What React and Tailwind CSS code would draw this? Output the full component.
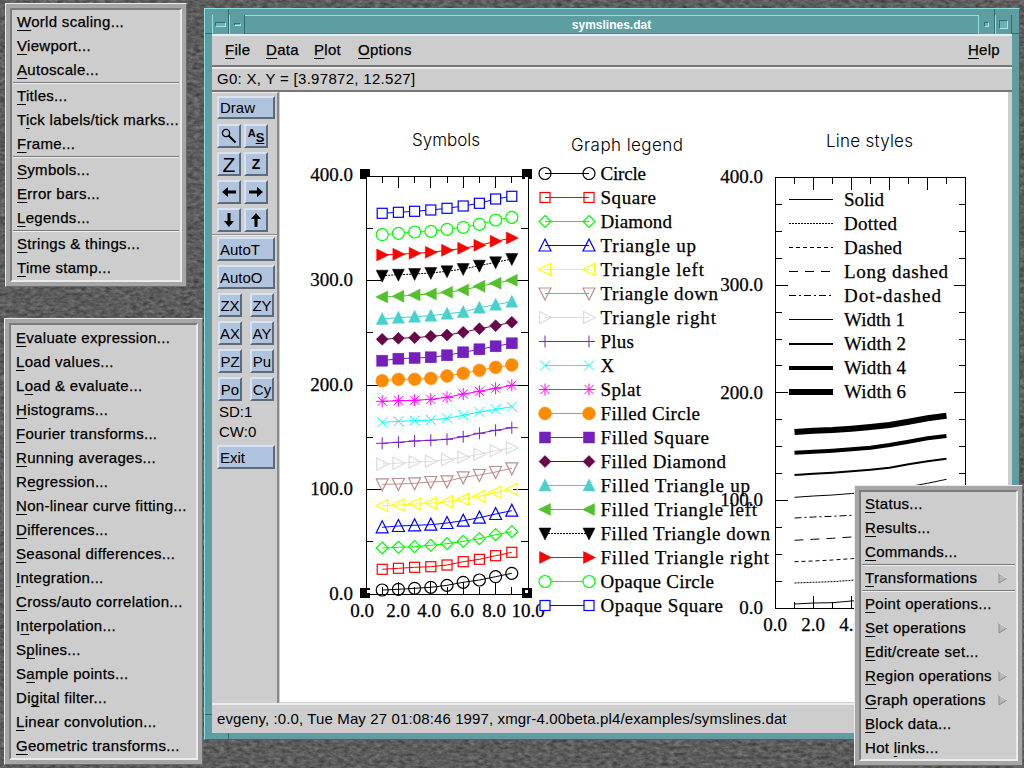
import React from "react";

const BTN = "flex items-center justify-center bg-[#b0c4de] border-2 border-t-[#d8e2f0] border-l-[#d8e2f0] border-r-[#5c6a7d] border-b-[#5c6a7d] text-black text-[15px] leading-none";
const MARK = "absolute bg-[#2f6f70]";

function Item({ label, u = 0, arrow, pad }) {
  return (
    <div className={"flex items-center justify-between h-6 pr-[8px] text-[15px] tracking-[0.3px] text-black whitespace-pre [-webkit-text-stroke:0.25px_#000] " + pad}>
      <span>
        {label.slice(0, u)}
        <span className="underline decoration-1 underline-offset-[3px]">{label[u]}</span>
        {label.slice(u + 1)}
      </span>
      {arrow && (
        <svg width="10" height="12" viewBox="0 0 10 12">
          <path d="M1 1 L9 6 L1 11 Z" fill="#b8b8b8" stroke="#8a8a8a" strokeWidth="1" />
          <path d="M1 1 L9 6" stroke="#eee" strokeWidth="1" />
        </svg>
      )}
    </div>
  );
}

function Sep() {
  return <div className="h-[2px] mx-px border-t border-b border-t-[#7a7a7a] border-b-[#f0f0f0]" />;
}

function Menu({ className, inner = "", pad = "pl-[5px]", rows }) {
  return (
    <div className={"absolute bg-[#a6a6a6] border border-t-[#ececec] border-l-[#ececec] border-r-[#6a6a6a] border-b-[#6a6a6a] p-[4px] " + className}>
      <div className={"h-full bg-[#cdcdcd] border-2 border-t-[#7c7c7c] border-l-[#7c7c7c] border-r-[#ececec] border-b-[#ececec] " + inner}>
        {rows.map((r, i) => (r === "-" ? <Sep key={i} /> : <Item key={i} label={r[0]} u={r[1] || 0} arrow={r[2]} pad={pad} />))}
      </div>
    </div>
  );
}

const menu1 = [["World scaling..."], ["Viewport..."], ["Autoscale..."], "-", ["Titles..."], ["Tick labels/tick marks...", 1], ["Frame..."], "-", ["Symbols..."], ["Error bars..."], ["Legends..."], "-", ["Strings & things..."], ["Time stamp..."]];
const menu2 = [["Evaluate expression..."], ["Load values..."], ["Load & evaluate...", 1], ["Histograms..."], ["Fourier transforms..."], ["Running averages..."], ["Regression...", 1], ["Non-linear curve fitting..."], ["Differences..."], ["Seasonal differences..."], ["Integration..."], ["Cross/auto correlation..."], ["Interpolation...", 1], ["Splines...", 1], ["Sample points...", 1], ["Digital filter...", 2], ["Linear convolution..."], ["Geometric transforms..."]];
const menu3 = [["Status..."], ["Results..."], ["Commands..."], "-", ["Transformations", 0, true], "-", ["Point operations..."], ["Set operations", 0, true], ["Edit/create set..."], ["Region operations", 0, true], ["Graph operations", 0, true], ["Block data..."], ["Hot links...", 4]];

function Marker({ kind, x, y, c }) {
  const sw = 1.2;
  const t = { fill: "none", stroke: c, strokeWidth: sw };
  const f = { fill: c, stroke: c, strokeWidth: 0.5 };
  const o = { fill: "#fff", stroke: c, strokeWidth: sw };
  const tri = {
    up: `${x},${y - 6.5} ${x - 6},${y + 5.5} ${x + 6},${y + 5.5}`,
    down: `${x},${y + 6.5} ${x - 6},${y - 5.5} ${x + 6},${y - 5.5}`,
    left: `${x - 6.5},${y} ${x + 5.5},${y - 6} ${x + 5.5},${y + 6}`,
    right: `${x + 6.5},${y} ${x - 5.5},${y - 6} ${x - 5.5},${y + 6}`,
  };
  const dia = `${x},${y - 6} ${x + 6},${y} ${x},${y + 6} ${x - 6},${y}`;
  switch (kind) {
    case "circle": return <circle cx={x} cy={y} r="6" {...t} />;
    case "square": return <rect x={x - 5} y={y - 5} width="10" height="10" {...t} />;
    case "diamond": return <polygon points={dia} {...t} />;
    case "up": case "down": case "left": case "right": return <polygon points={tri[kind]} {...t} />;
    case "plus": return <path d={`M${x - 6} ${y}H${x + 6}M${x} ${y - 6}V${y + 6}`} {...t} strokeWidth="1" />;
    case "x": return <path d={`M${x - 5} ${y - 5}L${x + 5} ${y + 5}M${x - 5} ${y + 5}L${x + 5} ${y - 5}`} {...t} strokeWidth="1" />;
    case "splat": return <path d={`M${x - 6} ${y}H${x + 6}M${x} ${y - 6}V${y + 6}M${x - 4.5} ${y - 4.5}L${x + 4.5} ${y + 4.5}M${x - 4.5} ${y + 4.5}L${x + 4.5} ${y - 4.5}`} {...t} strokeWidth="1" />;
    case "fcircle": return <circle cx={x} cy={y} r="6.4" {...f} />;
    case "fsquare": return <rect x={x - 5.5} y={y - 5.5} width="11" height="11" {...f} />;
    case "fdiamond": return <polygon points={dia} {...f} />;
    case "fup": case "fdown": case "fleft": case "fright": return <polygon points={tri[kind.slice(1)]} {...f} />;
    case "ocircle": return <circle cx={x} cy={y} r="6" {...o} />;
    case "osquare": return <rect x={x - 5} y={y - 5} width="10" height="10" {...o} />;
    default: return null;
  }
}

const series = [
  ["Circle", "circle", "#000", 647, [590, 589.3, 588.3, 587.3, 585.3, 582.3, 580, 576.7, 573.3]],
  ["Square", "square", "#f00", 657, [569.3, 568.3, 567.3, 566.7, 565, 561.7, 559.3, 555.7, 552.3]],
  ["Diamond", "diamond", "#0f0", 673, [548, 547.3, 546.7, 545.3, 543.7, 541.3, 538.7, 534.7, 531.7]],
  ["Triangle up", "up", "#00f", 697, [527.3, 526, 525.3, 524.7, 523, 520.7, 517.7, 514, 510.7]],
  ["Triangle left", "left", "#ff0", 705, [505.7, 505, 504, 503.3, 501.7, 499.3, 496.3, 492.3, 489.3]],
  ["Triangle down", "down", "#bc8f8f", 719, [484.3, 484, 483.3, 482, 481.3, 477.3, 475, 472, 468.3]],
  ["Triangle right", "right", "#dcdcdc", 717, [464, 463.3, 462, 461.3, 459.7, 457.3, 454.3, 450.7, 447.7]],
  ["Plus", "plus", "#7a1fc0", 635, [443.3, 442.3, 441, 440.3, 439.3, 436.7, 433.3, 430.3, 427.7]],
  ["X", "x", "#0ff", 611, [422.3, 421.3, 420.7, 420, 418.3, 415.3, 412, 409.3, 406.7]],
  ["Splat", "splat", "#f0f", 642, [401.3, 400.7, 400.3, 399.3, 397.3, 394, 391.3, 388.3, 385.3]],
  ["Filled Circle", "fcircle", "#ff8c00", 701, [380.7, 379.3, 379.3, 378.3, 376, 373.3, 370.3, 367.3, 365]],
  ["Filled Square", "fsquare", "#7320bd", 710, [360.7, 358.7, 358, 357.3, 355.3, 352.3, 349.3, 346.3, 343.3]],
  ["Filled Diamond", "fdiamond", "#670748", 727, [339.3, 338.3, 337.7, 336.3, 335, 332.3, 328.7, 325.7, 322.3]],
  ["Filled Triangle up", "fup", "#48d1cc", 751, [319, 317.7, 316.7, 315.7, 313.7, 312, 307.7, 304.7, 301.7]],
  ["Filled Triangle left", "fleft", "#55c02e", 758, [297, 296.3, 295, 294, 292.3, 290, 286.3, 283.3, 280.3]],
  ["Filled Triangle down", "fdown", "#000", 771, [275.7, 274.7, 274, 273, 271.3, 269, 265.7, 262.3, 259]],
  ["Filled Triangle right", "fright", "#f00", 770, [255, 254.3, 253.3, 252.3, 250.3, 248.3, 245.3, 241.3, 238]],
  ["Opaque Circle", "ocircle", "#0f0", 715, [234.7, 233.3, 232, 231.3, 229.3, 227.3, 224.3, 220, 217.3]],
  ["Opaque Square", "osquare", "#00f", 724, [213.3, 212.3, 211.3, 210, 208.3, 206, 203.3, 199, 196.3]],
];

const lineSeries = [
  ["Solid", 1, "", 885, [604, 603, 602.7, 601, 599.5, 597.5, 594, 591, 588]],
  ["Dotted", 1, "2 1", 898, [583, 582.3, 581.7, 580.3, 578.5, 576.5, 573, 570, 567]],
  ["Dashed", 1, "4 3", 903, [561.7, 561, 560, 558.7, 557, 555, 551.5, 548.5, 545.5]],
  ["Long dashed", 1, "9 7", 949, [540.3, 539.3, 538.3, 537, 535.5, 533.5, 530, 527, 524]],
  ["Dot-dashed", 1, "7 3 2 3", 942, [518, 517, 516.3, 515.3, 513.5, 511.5, 508, 505, 502]],
  ["Width 1", 1, "", 906, [497.3, 496, 495, 493.5, 492, 490, 486.7, 483.3, 479.3]],
  ["Width 2", 2, "", 907, [475, 473.7, 472.7, 471.3, 469.7, 467.7, 464.3, 461.3, 458.7]],
  ["Width 4", 4, "", 907, [452.7, 451.7, 450.7, 449.3, 447.7, 445, 441.7, 438.3, 436]],
  ["Width 6", 6, "", 907, [432, 430.7, 430, 428.7, 427, 425, 421.7, 418.3, 415.7]],
];

const SERIF = "'Liberation Serif', serif";
const THIN = "Inter, 'Liberation Sans', sans-serif";

function Txt({ x, y, end, children, anchor, size = 19, font = SERIF, weight, sw = 0.25 }) {
  const len = end !== undefined ? { textLength: end - x, lengthAdjust: "spacing" } : {};
  return <text x={x} y={y} fontFamily={font} fontSize={size} fontWeight={weight} fill="#000" stroke="#000" strokeWidth={sw} textAnchor={anchor} {...len}>{children}</text>;
}

function Handle({ x, y, nx, ny }) {
  return (
    <g shapeRendering="crispEdges">
      <rect x={x - 5} y={y - 5} width="10" height="10" fill="#000" />
      <rect x={nx} y={ny} width="3" height="3" fill="#fff" />
    </g>
  );
}

function Chart() {
  const X1 = (i) => 367 + 16.2 * i;
  const Y1 = (v) => 594 - v * 1.045;
  const X2 = (i) => 776.5 + 19 * i;
  const Y2 = (v) => 608 - v * 1.076;
  const t1 = [];
  for (let v = 0; v <= 400; v += 50) {
    const l = v % 100 === 0 ? 15 : 7;
    const y = Y1(v);
    t1.push(`M367 ${y}h${l}M529 ${y}h${-l}`);
  }
  for (let i = 1; i < 10; i++) {
    const l = i % 2 === 0 ? 12 : 7;
    t1.push(`M${X1(i)} 176v${l}M${X1(i)} 594v${-l}`);
  }
  const t2 = [];
  for (let v = 0; v <= 400; v += 25) {
    const l = v % 100 === 0 ? 12 : 6.5;
    const y = Y2(v);
    t2.push(`M776.5 ${y}h${l}M966.5 ${y}h${-l}`);
  }
  for (let i = 1; i < 10; i++) {
    const l = i % 2 === 0 ? 12 : 6;
    t2.push(`M${X2(i)} 177.5v${l}M${X2(i)} 608v${-l}`);
  }
  return (
    <svg className="block w-full h-full" viewBox="281 92 728 610">
      <Txt x={413} y={146} end={481} size={17} font={THIN} weight={300} sw={0}>Symbols</Txt>
      <Txt x={572} y={151} end={684} size={17} font={THIN} weight={300} sw={0}>Graph legend</Txt>
      <Txt x={827} y={147} end={914} size={17} font={THIN} weight={300} sw={0}>Line styles</Txt>

      {/* plot 1 */}
      <rect x="367" y="176" width="162" height="418" fill="none" stroke="#000" strokeWidth="1" shapeRendering="crispEdges" />
      <path d={t1.join("")} stroke="#000" strokeWidth="1" fill="none" shapeRendering="crispEdges" />
      <Handle x={366} y={174} nx={368} ny={177} />
      <Handle x={528} y={174} nx={526} ny={177} />
      <Handle x={366} y={593} nx={368} ny={590} />
      <Handle x={528} y={593} nx={526} ny={590} />
      {[["400.0", 181], ["300.0", 286], ["200.0", 391], ["100.0", 495], ["0.0", 600]].map(([s, y]) => (
        <Txt key={s} x={354} y={y} anchor="end">{s}</Txt>
      ))}
      {[["0.0", 363], ["2.0", 399], ["4.0", 430], ["6.0", 463], ["8.0", 495], ["10.0", 529]].map(([s, x]) => (
        <Txt key={s} x={x} y={617} anchor="middle">{s}</Txt>
      ))}
      {series.map(([name, kind, c, , ys]) => {
        const dash = kind === "fdown" ? "2 1" : undefined;
        const pts = ys.map((y, i) => `${X1(i + 1)},${y}`).join(" ");
        return (
          <g key={name}>
            <polyline points={pts} fill="none" stroke={c} strokeWidth="1" strokeDasharray={dash} />
            {ys.map((y, i) => <Marker key={i} kind={kind} x={X1(i + 1)} y={y} c={c} />)}
          </g>
        );
      })}

      {/* legend */}
      {series.map(([name, kind, c, end], i) => {
        const y = 173.5 + 24 * i;
        return (
          <g key={name}>
            <line x1="546" x2="590" y1={y} y2={y} stroke={c} strokeWidth="1" strokeDasharray={kind === "fdown" ? "2 1" : undefined} shapeRendering="crispEdges" />
            <Marker kind={kind} x={546} y={y} c={c} />
            <Marker kind={kind} x={590} y={y} c={c} />
            <Txt x={601.5} y={y + 6} end={end}>{name}</Txt>
          </g>
        );
      })}

      {/* plot 2 */}
      <rect x="776.5" y="177.5" width="190" height="430.5" fill="none" stroke="#000" strokeWidth="1" shapeRendering="crispEdges" />
      <path d={t2.join("")} stroke="#000" strokeWidth="1" fill="none" shapeRendering="crispEdges" />
      {[["400.0", 183], ["300.0", 291], ["200.0", 399], ["100.0", 506], ["0.0", 614]].map(([s, y]) => (
        <Txt key={s} x={764} y={y} anchor="end">{s}</Txt>
      ))}
      {[["0.0", 776], ["2.0", 814], ["4.0", 852]].map(([s, x]) => (
        <Txt key={s} x={x} y={631} anchor="middle">{s}</Txt>
      ))}
      {lineSeries.map(([name, w, dash, end, ys], i) => {
        const y = 199.5 + 24 * i;
        return (
          <g key={name}>
            <line x1="790" x2="834" y1={y} y2={y} stroke="#000" strokeWidth={w} strokeDasharray={dash || undefined} shapeRendering="crispEdges" />
            <Txt x={845} y={y + 6} end={end}>{name}</Txt>
            <polyline points={ys.map((v, k) => `${X2(k + 1)},${v}`).join(" ")} fill="none" stroke="#000" strokeWidth={w} strokeDasharray={dash || undefined} />
          </g>
        );
      })}
    </svg>
  );
}

function Arrow({ d }) {
  const paths = {
    left: "M1 8 L7 3 V6.5 H15 V9.5 H7 V13 Z",
    right: "M15 8 L9 3 V6.5 H1 V9.5 H9 V13 Z",
    down: "M8 15 L3 9 H6.5 V1 H9.5 V9 H13 Z",
    up: "M8 1 L3 7 H6.5 V15 H9.5 V7 H13 Z",
  };
  return <svg width="16" height="16" viewBox="0 0 16 16"><path d={paths[d]} fill="#000" /></svg>;
}

function SideRow({ a, b }) {
  return (
    <div className="flex justify-between pl-px pr-[3px] h-6 mb-1">
      <div className={BTN + " w-6"}>{a}</div>
      <div className={BTN + " w-6"}>{b}</div>
    </div>
  );
}

function IconRow({ a, b }) {
  return (
    <div className="flex gap-[3px] h-6 mb-1">
      <div className={BTN + " w-6"}>{a}</div>
      <div className={BTN + " w-6"}>{b}</div>
    </div>
  );
}

function WinBtn({ children, className = "" }) {
  return (
    <div className={"flex items-center justify-center bg-[#5f9ea0] border-l border-r border-l-[#8fe0e0] border-r-[#2f6f70] " + className}>
      {children}
    </div>
  );
}

export default function App() {
  return (
    <div className="relative w-[1024px] h-[768px] overflow-hidden bg-[#5c5c5c] font-['Liberation_Sans',sans-serif]">
      <svg className="absolute inset-0" width="1024" height="768">
        <filter id="granite" x="0" y="0" width="100%" height="100%" colorInterpolationFilters="sRGB">
          <feTurbulence type="fractalNoise" baseFrequency="0.16 0.3" numOctaves="4" seed="7" />
          <feColorMatrix values="0.3 0.12 0 0 0.15  0.3 0.12 0 0 0.15  0.3 0.12 0 0 0.15  0 0 0 0 1" />
        </filter>
        <rect width="1024" height="768" filter="url(#granite)" />
      </svg>

      {/* main window */}
      <div className="absolute left-[204px] top-2 w-[816px] h-[732px] flex flex-col bg-[#5f9ea0] border border-t-[#8fe0e0] border-l-[#8fe0e0] border-r-[#2f6f70] border-b-[#2f6f70] pl-[7px] pr-[7px] pb-[6px] pt-[6px]">
        <div className={MARK + " left-[23px] top-0 w-px h-[6px]"} />
        <div className={MARK + " right-[24px] top-0 w-px h-[6px]"} />
        <div className={MARK + " left-0 top-[24px] w-[7px] h-px"} />
        <div className={MARK + " right-0 top-[24px] w-[7px] h-px"} />
        <div className={MARK + " left-[23px] bottom-0 w-px h-[6px]"} />
        <div className={MARK + " right-[24px] bottom-0 w-px h-[6px]"} />
        <div className={MARK + " left-0 bottom-[24px] w-[7px] h-px"} />
        <div className={MARK + " right-0 bottom-[24px] w-[7px] h-px"} />

        <div className="h-[19px] flex text-white text-[12px] font-bold">
          <WinBtn className="w-[17px]"><div className="w-[11px] h-[5px] border border-t-[#2f6f70] border-l-[#2f6f70] border-r-[#9fe8e8] border-b-[#9fe8e8] bg-[#6fb0b2]" /></WinBtn>
          <WinBtn className="w-[16px]"><div className="w-[7px] h-[3px] border border-t-[#2f6f70] border-l-[#2f6f70] border-r-[#9fe8e8] border-b-[#9fe8e8] bg-[#6fb0b2]" /></WinBtn>
          <div className="flex-1 flex items-center justify-center border-t border-b border-t-[#8fe0e0] border-b-[#4a8a8c]">symslines.dat</div>
          <WinBtn className="w-[17px]"><div className="w-[5px] h-[5px] border border-t-[#2f6f70] border-l-[#2f6f70] border-r-[#9fe8e8] border-b-[#9fe8e8] bg-[#6fb0b2]" /></WinBtn>
          <WinBtn className="w-[17px]"><div className="w-[9px] h-[9px] border border-t-[#2f6f70] border-l-[#2f6f70] border-r-[#9fe8e8] border-b-[#9fe8e8] bg-[#6fb0b2]" /></WinBtn>
        </div>

        <div className="w-[800px] h-[700px] flex flex-col bg-[#cdcdcd] text-black overflow-hidden">
          <div className="h-[33px] shrink-0 flex items-center justify-between pl-[13px] pr-[12px] border-t-2 border-t-[#ececec] border-b-2 border-b-[#767676] text-[15px] tracking-[0.3px] [-webkit-text-stroke:0.25px_#000]">
            <div className="flex">
              <span className="w-[41px]"><span className="underline decoration-1 underline-offset-[3px]">F</span>ile</span>
              <span className="w-[48px]"><span className="underline decoration-1 underline-offset-[3px]">D</span>ata</span>
              <span className="w-[44px]"><span className="underline decoration-1 underline-offset-[3px]">P</span>lot</span>
              <span><span className="underline decoration-1 underline-offset-[3px]">O</span>ptions</span>
            </div>
            <span><span className="underline decoration-1 underline-offset-[3px]">H</span>elp</span>
          </div>
          <div className="h-[25px] shrink-0 flex items-center pl-[5px] border-t-2 border-t-[#ececec] border-b-2 border-b-[#767676] text-[15px] tracking-[0.3px]">G0: X, Y = [3.97872, 12.527]</div>

          <div className="h-[611px] shrink-0 flex">
            <div className="w-[67px] shrink-0 flex flex-col border-r-2 border-r-[#8a8a8a] border-t border-t-[#ececec] pl-[5px] pt-[3px] text-[15px]">
              <div className={BTN + " w-[58px] h-[23px] mb-[5px] justify-start pl-px"}>Draw</div>
              <IconRow
                a={<svg width="18" height="18" viewBox="0 0 18 18"><circle cx="6" cy="6" r="3.6" fill="none" stroke="#000" strokeWidth="1.3" /><path d="M8.5 8.5 L15.5 15.5" stroke="#000" strokeWidth="2" /></svg>}
                b={<span className="flex items-start text-[11px] font-bold"><span className="text-[11px]">A</span><span className="text-[13px] mt-[3px] underline decoration-1">S</span></span>}
              />
              <IconRow a={<span className="text-[21px]">Z</span>} b={<span className="text-[14px] font-bold">Z</span>} />
              <IconRow a={<Arrow d="left" />} b={<Arrow d="right" />} />
              <IconRow a={<Arrow d="down" />} b={<Arrow d="up" />} />
              <div className="h-[2px] -ml-[5px] -mt-[2px] border-t border-b border-t-[#8a8a8a] border-b-[#ececec] mb-px" />
              <div className={BTN + " w-[58px] h-6 mb-1 justify-start pl-px"}>AutoT</div>
              <div className={BTN + " w-[58px] h-6 mb-1 justify-start pl-px"}>AutoO</div>
              <SideRow a="ZX" b="ZY" />
              <SideRow a="AX" b="AY" />
              <SideRow a="PZ" b="Pu" />
              <SideRow a="Po" b="Cy" />
              <div className="h-5 -mt-[3px] pl-[2px] flex items-center text-[15px]">SD:1</div>
              <div className="h-5 pl-[2px] flex items-center text-[15px]">CW:0</div>
              <div className={BTN + " w-[58px] h-6 mt-[3px] justify-start pl-px"}>Exit</div>
            </div>
            <div className="flex-1 pl-[1px] pr-[2px] pb-[1px]">
              <div className="w-[728px] h-[610px] bg-white"><Chart /></div>
            </div>
          </div>

          <div className="flex-1 flex items-center pl-[5px] border-t-2 border-t-[#ececec] text-[15px] tracking-[0.12px]">
            evgeny, :0.0, Tue May 27 01:08:46 1997, xmgr-4.00beta.pl4/examples/symslines.dat
          </div>
        </div>
      </div>

      <Menu className="left-[5px] top-[3px] w-[182px] h-[284px]" rows={menu1} />
      <Menu className="left-1 top-[318px] w-[199px] h-[447px]" inner="pt-px" rows={menu2} />
      <Menu className="left-[854px] top-[485px] w-[169px] h-[281px]" pad="pl-[4px]" rows={menu3} />
    </div>
  );
}
